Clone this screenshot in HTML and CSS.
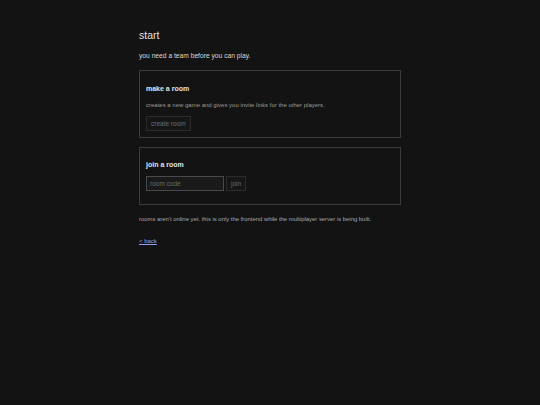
FILE: index.html
```html
<!DOCTYPE html>
<html>
<head>
<meta charset="utf-8">
<link rel="stylesheet" href="styles.css">
</head>
<body>
<main class="page">
  <h1 class="title">start</h1>
  <p class="lead">you need a team before you can play.</p>
  <section class="card">
    <h2 class="card-title">make a room</h2>
    <p class="card-text">creates a new game and gives you invite links for the other players.</p>
    <button class="btn">create room</button>
  </section>
  <section class="card card-join">
    <h2 class="card-title">join a room</h2>
    <div class="row">
      <input class="input" type="text" placeholder="room code">
      <button class="btn">join</button>
    </div>
  </section>
  <p class="note">rooms aren't online yet. this is only the frontend while the multiplayer server is being built.</p>
  <a class="back" href="#">&lt; back</a>
</main>
</body>
</html>
```
FILE: styles.css
```css
html, body {
  margin: 0;
  padding: 0;
  background: #131313;
  color: #dcdcdc;
  font-family: "Liberation Sans", Arial, sans-serif;
}
.page {
  width: 262px;
  margin: 0 auto;
  padding-top: 29px;
  display: flex;
  flex-direction: column;
  align-items: flex-start;
}
.title {
  font-size: 10.5px;
  font-weight: normal;
  margin: 0 0 9px;
  line-height: 13px;
  color: #e0e0e0;
}
.lead {
  font-size: 6.7px;
  margin: 0 0 9px;
  line-height: 10px;
  color: #d8d8d8;
}
.card {
  align-self: stretch;
  border: 1px solid #3c3c3c;
  padding: 13px 6px 6px;
  margin-bottom: 9px;
  display: flex;
  flex-direction: column;
  align-items: flex-start;
}
.card-title {
  font-size: 7px;
  font-weight: bold;
  margin: 0 0 7px;
  line-height: 10px;
  color: #e4e4e4;
}
.card-text {
  font-size: 6px;
  margin: 0 0 6px;
  line-height: 9px;
  color: #9a9a9a;
}
.btn {
  font-family: inherit;
  font-size: 6.5px;
  color: #6e6e6e;
  background: #161616;
  border: 1px solid #2c2c2c;
  padding: 0 4px;
  height: 15px;
  line-height: 13px;
}
.card-join {
  padding-top: 12px;
  padding-bottom: 13px;
  margin-bottom: 10px;
}
.card-join .card-title {
  margin-bottom: 6px;
}
.row {
  display: flex;
  gap: 2px;
}
.input {
  font-family: inherit;
  font-size: 6.5px;
  width: 78px;
  height: 15px;
  box-sizing: border-box;
  background: #1a1a1a;
  border: 1px solid #4a4a4a;
  color: #ccc;
  padding: 0 3px;
}
.input::placeholder {
  color: #6a6a6a;
}
.note {
  font-size: 5.9px;
  line-height: 9px;
  color: #a8a8a8;
  margin: 0 0 13px;
}
.back {
  font-size: 6px;
  line-height: 9px;
  color: #8fa2e8;
}
```
